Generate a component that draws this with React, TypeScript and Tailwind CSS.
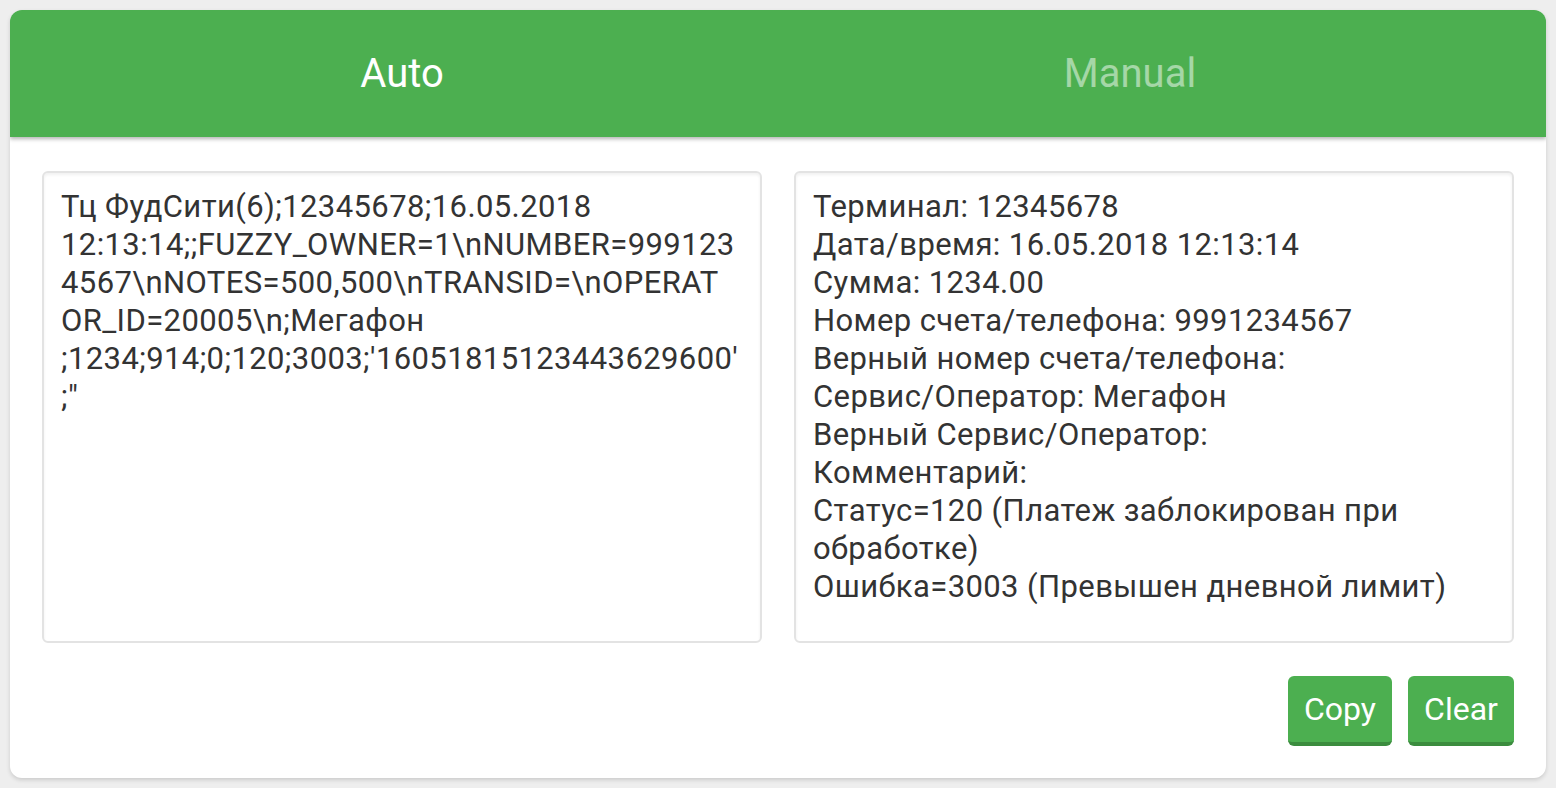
const rawLines = [
  "Тц ФудСити(6);12345678;16.05.2018",
  "12:13:14;;FUZZY_OWNER=1\\nNUMBER=999123",
  "4567\\nNOTES=500,500\\nTRANSID=\\nOPERAT",
  "OR_ID=20005\\n;Мегафон",
  ";1234;914;0;120;3003;'16051815123443629600'",
  ";\"",
];

const parsedLines = [
  "Терминал: 12345678",
  "Дата/время: 16.05.2018 12:13:14",
  "Сумма: 1234.00",
  "Номер счета/телефона: 9991234567",
  "Верный номер счета/телефона:",
  "Сервис/Оператор: Мегафон",
  "Верный Сервис/Оператор:",
  "Комментарий:",
  "Статус=120 (Платеж заблокирован при",
  "обработке)",
  "Ошибка=3003 (Превышен дневной лимит)",
];

function TextBox({ lines }: { lines: string[] }) {
  return (
    <div className="h-[472px] rounded-[6px] border-2 border-[#e3e3e3] bg-white px-[17px] pt-[15px] text-[31px] leading-[38px] tracking-[0.4px] text-[#333] shadow-[inset_0_2px_3px_rgba(0,0,0,0.06)]">
      {lines.map((line, i) => (
        <div key={i} className="whitespace-pre">
          {line}
        </div>
      ))}
    </div>
  );
}

export default function App() {
  return (
    <div
      className="min-h-screen bg-[#eeeeee] p-[10px]"
      style={{ fontFamily: "Roboto, 'Noto Sans', sans-serif" }}
    >
      <div className="overflow-hidden rounded-[12px] bg-white shadow-[0_2px_4px_rgba(0,0,0,0.15)]">
        <div className="relative z-10 flex h-[127px] items-center bg-[#4caf50] pl-[28px] pr-[52px] shadow-[0_2px_4px_rgba(0,0,0,0.3)]">
          <div className="flex-1 text-center text-[40px] text-white">Auto</div>
          <div className="flex-1 text-center text-[40px] text-white/50">Manual</div>
        </div>

        <div className="px-[32px] pt-[34px] pb-[32px]">
          <div className="grid grid-cols-2 gap-[32px]">
            <TextBox lines={rawLines} />
            <TextBox lines={parsedLines} />
          </div>

          <div className="mt-[33px] flex justify-end gap-[16px]">
            <button className="h-[70px] w-[104px] rounded-[6px] border-b-[4px] border-[#3b8c3e] bg-[#4caf50] text-[32px] text-white">
              Copy
            </button>
            <button className="h-[70px] w-[106px] rounded-[6px] border-b-[4px] border-[#3b8c3e] bg-[#4caf50] text-[32px] text-white">
              Clear
            </button>
          </div>
        </div>
      </div>
    </div>
  );
}
